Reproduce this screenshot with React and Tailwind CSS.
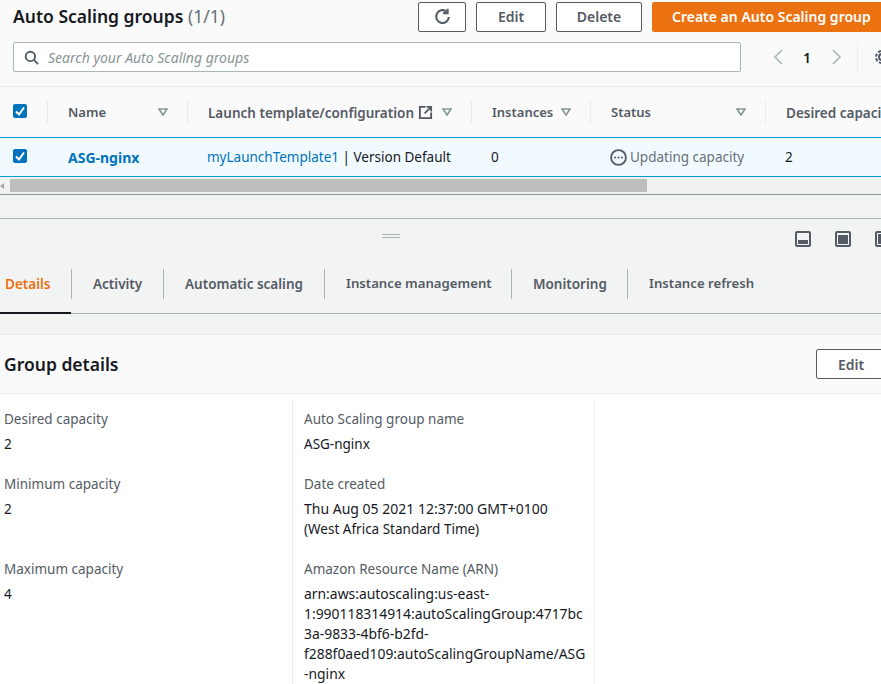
const font = { fontFamily: '"Noto Sans", sans-serif' };

function Checkbox() {
  return (
    <span className="w-[14px] h-[14px] rounded-[2px] bg-[#0073bb] flex items-center justify-center shrink-0">
      <svg viewBox="0 0 14 14" className="w-[14px] h-[14px]" fill="none" stroke="#fff" strokeWidth="2">
        <path d="M3 7.5 L6 10.5 L11 3.5" />
      </svg>
    </span>
  );
}

function SortIcon() {
  return (
    <svg viewBox="0 0 10 8" className="w-[10px] h-[8px] shrink-0" fill="none" stroke="#879596" strokeWidth="1.6">
      <path d="M1 1 H9 L5 7 Z" />
    </svg>
  );
}

function HeaderCell({ className, label, extra, wide, sep = true }) {
  return (
    <div className={`relative flex items-center shrink-0 h-full ${className}`}>
      <span className={`pt-[2px] font-semibold text-[#545b64] whitespace-nowrap ${wide ? 'text-[13.5px]' : 'text-[13px]'}`}>{label}</span>
      {extra}
      {sep && <span className="absolute right-0 top-[13px] h-[24px] w-px bg-[#eaeded]" />}
    </div>
  );
}

function Button({ className, children }) {
  return (
    <button className={`h-[30px] shrink-0 rounded-[2px] border border-[#545b64] bg-white text-[14px] font-semibold text-[#545b64] flex items-center justify-center ${className}`}>
      {children}
    </button>
  );
}

function Tab({ label, className, active, tight }) {
  return (
    <div className={`h-[30px] flex items-center shrink-0 ${className}`}>
      <span className={`font-semibold whitespace-nowrap ${tight ? 'text-[13.2px]' : 'text-[13.5px]'} ${active ? 'text-[#ec7211]' : 'text-[#545b64]'}`}>{label}</span>
    </div>
  );
}

function TabSep() {
  return <span className="w-px h-[30px] bg-[#aab7b8] shrink-0" />;
}

function PaneIcon({ variant }) {
  return (
    <svg viewBox="0 0 16 16" className="w-[16px] h-[16px] shrink-0" fill="none">
      <rect x="1" y="1" width="14" height="14" rx="1" stroke="#545b64" strokeWidth="2" />
      {variant === 'bottom' && <rect x="3" y="9" width="10" height="4" fill="#545b64" />}
      {variant === 'full' && <rect x="3" y="4" width="10" height="9" fill="#545b64" />}
      {variant === 'side' && <rect x="3" y="3" width="5" height="10" fill="#545b64" />}
    </svg>
  );
}

function Field({ label, children, className }) {
  return (
    <div className={className}>
      <div className="text-[13.5px] leading-[20px] text-[#545b64]">{label}</div>
      <div className="mt-[5px] text-[13.5px] leading-[20px] text-[#16191f]">{children}</div>
    </div>
  );
}

const arnLines = [
  'arn:aws:autoscaling:us-east-',
  '1:990118314914:autoScalingGroup:4717bc',
  '3a-9833-4bf6-b2fd-',
  'f288f0aed109:autoScalingGroupName/ASG',
  '-nginx',
];

export default function App() {
  return (
    <div className="w-[881px] h-[684px] overflow-hidden bg-white" style={font}>
      <div className="bg-[#fafafa] h-[87px] border-b border-[#eaeded] overflow-hidden">
        <div className="flex items-center h-[33px] pl-[13px] gap-[10px] w-[900px]">
          <h1 className="text-[17.5px] font-semibold text-[#16191f] whitespace-nowrap w-[395px]">
            Auto Scaling groups <span className="font-normal text-[#687078]">(1/1)</span>
          </h1>
          <Button className="w-[48px]">
            <svg viewBox="0 0 16 16" className="w-[17px] h-[17px]" fill="none" stroke="#545b64" strokeWidth="2">
              <path d="M14 8.5 A6 6 0 1 1 11.8 3.4" />
              <path d="M12.8 0.6 V4.8 H8.6" />
            </svg>
          </Button>
          <Button className="w-[70px]">Edit</Button>
          <Button className="w-[86px]">Delete</Button>
          <button className="h-[30px] w-[240px] shrink-0 rounded-[2px] bg-[#ec7211] text-[14px] font-semibold text-white text-left pl-[20px]">
            Create an Auto Scaling group
          </button>
        </div>
        <div className="flex items-center h-[30px] mt-[9px] pl-[13px] w-[900px]">
          <div className="w-[728px] h-[30px] shrink-0 bg-white border border-[#aab7b8] rounded-[2px] flex items-center pl-[10px]">
            <svg viewBox="0 0 16 16" className="w-[15px] h-[15px]" fill="none" stroke="#545b64" strokeWidth="2">
              <circle cx="6.8" cy="6.8" r="5" />
              <path d="M10.5 10.5 L15 15" />
            </svg>
            <span className="ml-[9px] text-[14px] italic text-[#879596]">Search your Auto Scaling groups</span>
          </div>
          <svg viewBox="0 0 10 16" className="ml-[32px] w-[10px] h-[16px]" fill="none" stroke="#aab7b8" strokeWidth="1.6">
            <path d="M9 1 L2 8 L9 15" />
          </svg>
          <span className="ml-[20px] text-[14px] font-semibold text-[#16191f]">1</span>
          <svg viewBox="0 0 10 16" className="ml-[21px] w-[10px] h-[16px]" fill="none" stroke="#aab7b8" strokeWidth="1.6">
            <path d="M1 1 L8 8 L1 15" />
          </svg>
          <span className="ml-[15px] w-px h-[30px] bg-[#eaeded]" />
          <svg viewBox="0 0 16 16" className="ml-[16px] w-[16px] h-[16px] shrink-0" fill="none" stroke="#545b64" strokeWidth="2">
            <circle cx="8" cy="8" r="3" />
            <circle cx="8" cy="8" r="6" strokeDasharray="3 1.7" />
          </svg>
        </div>
      </div>

      <div className="flex h-[50px] bg-[#fafafa] w-[900px]">
        <div className="relative w-[48px] h-full pl-[13px] pb-[3px] flex items-center shrink-0">
          <Checkbox />
          <span className="absolute right-0 top-[13px] h-[24px] w-px bg-[#eaeded]" />
        </div>
        <HeaderCell className="w-[140px] pl-[20px] justify-between pr-[20px]" label="Name" extra={<SortIcon />} />
        <HeaderCell
          className="w-[284px] pl-[20px]"
          label="Launch template/configuration"
          wide
          extra={
            <>
              <svg viewBox="0 0 16 16" className="ml-[4px] w-[15px] h-[15px] shrink-0" fill="none" stroke="#545b64" strokeWidth="2">
                <path d="M8 2 H2 V14 H14 V8" />
                <path d="M9 2 H14 V7 M14 2 L7 9" />
              </svg>
              <span className="ml-[9px]"><SortIcon /></span>
            </>
          }
        />
        <HeaderCell className="w-[119px] pl-[20px]" label="Instances" extra={<span className="ml-[8px]"><SortIcon /></span>} />
        <HeaderCell className="w-[175px] pl-[20px] justify-between pr-[20px]" label="Status" extra={<SortIcon />} />
        <HeaderCell className="pl-[20px]" label="Desired capacity" wide sep={false} />
      </div>

      <div className="flex items-center h-[40px] bg-[#f1faff] border-y border-[#00a1c9] w-[900px] text-[13.5px] text-[#16191f]">
        <div className="w-[48px] pl-[13px] pb-[2px] shrink-0"><Checkbox /></div>
        <div className="w-[139px] pl-[20px] shrink-0 text-[14px] font-bold text-[#0073bb]">ASG-nginx</div>
        <div className="w-[284px] pl-[20px] shrink-0 whitespace-nowrap">
          <span className="text-[#0073bb]">myLaunchTemplate1</span> | Version Default
        </div>
        <div className="w-[120px] pl-[20px] shrink-0">0</div>
        <div className="w-[175px] pl-[19px] shrink-0 flex items-center text-[#687078]">
          <svg viewBox="0 0 16 16" className="w-[17px] h-[17px] shrink-0 mr-[3px]" fill="none">
            <circle cx="8" cy="8" r="7" stroke="#545b64" strokeWidth="1.7" />
            <circle cx="4.8" cy="8" r="1" fill="#545b64" />
            <circle cx="8" cy="8" r="1" fill="#545b64" />
            <circle cx="11.2" cy="8" r="1" fill="#545b64" />
          </svg>
          Updating capacity
        </div>
        <div className="pl-[19px]">2</div>
      </div>

      <div className="h-[18px] bg-[#f1f1f1] border-b border-[#879596] flex items-center">
        <span className="w-[10px] shrink-0 flex items-center">
          <svg viewBox="0 0 4 6" className="w-[4px] h-[6px]"><path d="M4 0 L0 3 L4 6 Z" fill="#a3a3a3" /></svg>
        </span>
        <span className="w-[637px] h-[13px] bg-[#bdbdbd]" />
      </div>

      <div className="h-[23px] bg-[#f2f3f3]" />

      <div className="h-[96px] bg-[#f2f3f3] border-t border-[#aab7b8] relative overflow-hidden">
        <div className="h-[40px] relative">
          <span className="absolute left-[382px] top-[15px] w-[18px] h-[4px] border-y border-[#aab7b8]" />
          <div className="absolute top-[12px] left-[795px] flex gap-[24px]">
            <PaneIcon variant="bottom" />
            <PaneIcon variant="full" />
            <PaneIcon variant="side" />
          </div>
        </div>
        <div className="flex items-start h-[45px] mt-[10px] border-b border-[#aab7b8] relative">
          <Tab label="Details" className="w-[71px] pl-[5px]" active />
          <TabSep />
          <Tab label="Activity" className="w-[91px] pl-[21px]" />
          <TabSep />
          <Tab label="Automatic scaling" className="w-[160px] pl-[21px]" />
          <TabSep />
          <Tab label="Instance management" className="w-[186px] pl-[21px]" tight />
          <TabSep />
          <Tab label="Monitoring" className="w-[115px] pl-[21px]" />
          <TabSep />
          <Tab label="Instance refresh" className="pl-[21px]" tight />
          <span className="absolute left-0 bottom-[-1px] w-[71px] h-[2px] bg-[#16191f]" />
        </div>
      </div>

      <div className="h-[20px] bg-[#f2f3f3]" />

      <div className="h-[60px] bg-[#fafafa] border-y border-[#eaeded] flex items-center relative overflow-hidden">
        <h2 className="pl-[4px] text-[17.5px] font-semibold text-[#16191f]">Group details</h2>
        <Button className="absolute left-[816px] top-[14px] w-[70px]">Edit</Button>
      </div>

      <div className="flex pt-[6px]">
        <div className="w-[293px] shrink-0 border-r border-[#eaeded] pl-[4px] pt-[9px] h-[290px]">
          <Field label="Desired capacity">2</Field>
          <Field label="Minimum capacity" className="mt-[20px]">2</Field>
          <Field label="Maximum capacity" className="mt-[40px]">4</Field>
        </div>
        <div className="w-[302px] shrink-0 border-r border-[#eaeded] pl-[11px] pt-[9px] h-[290px]">
          <Field label="Auto Scaling group name">ASG-nginx</Field>
          <Field label="Date created" className="mt-[20px]">
            <span className="block text-[14px]">Thu Aug 05 2021 12:37:00 GMT+0100</span>
            <span className="block">(West Africa Standard Time)</span>
          </Field>
          <Field label="Amazon Resource Name (ARN)" className="mt-[20px]">
            {arnLines.map((line) => (
              <span key={line} className="block whitespace-nowrap text-[13.9px]">{line}</span>
            ))}
          </Field>
        </div>
      </div>
    </div>
  );
}
